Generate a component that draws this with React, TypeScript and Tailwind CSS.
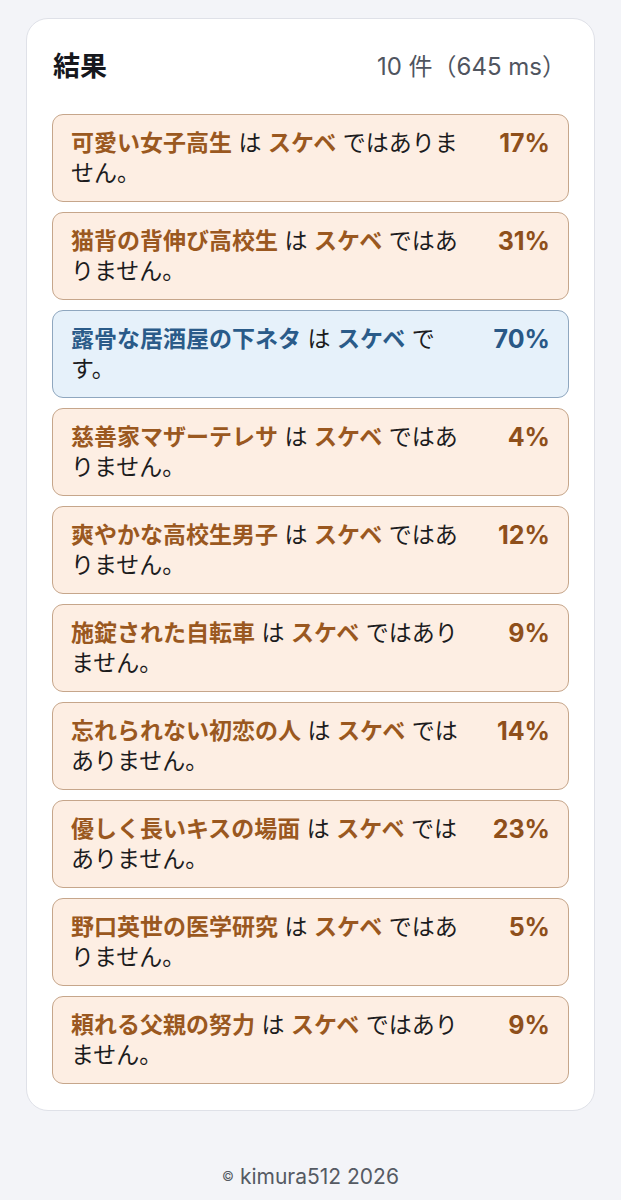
type Result = { subject: string; pct: number; sukebe: boolean };

const results: Result[] = [
  { subject: '可愛い女子高生', pct: 17, sukebe: false },
  { subject: '猫背の背伸び高校生', pct: 31, sukebe: false },
  { subject: '露骨な居酒屋の下ネタ', pct: 70, sukebe: true },
  { subject: '慈善家マザーテレサ', pct: 4, sukebe: false },
  { subject: '爽やかな高校生男子', pct: 12, sukebe: false },
  { subject: '施錠された自転車', pct: 9, sukebe: false },
  { subject: '忘れられない初恋の人', pct: 14, sukebe: false },
  { subject: '優しく長いキスの場面', pct: 23, sukebe: false },
  { subject: '野口英世の医学研究', pct: 5, sukebe: false },
  { subject: '頼れる父親の努力', pct: 9, sukebe: false },
];

const ResultRow = ({ r }: { r: Result }) => {
  const box = r.sukebe
    ? 'bg-[#e6f1fa] border-[#8fa7bf]'
    : 'bg-[#fdeee3] border-[#c6a68b]';
  const accent = r.sukebe ? 'text-[#2a5b89]' : 'text-[#9a5820]';
  const pctColor = r.sukebe ? 'text-[#295886]' : 'text-[#8e4f1b]';

  return (
    <div className={`flex items-start rounded-[11px] border px-[18px] py-[13px] ${box}`}>
      <p className="flex-1 text-[23px] leading-[30px] text-[#1c1c1e]">
        <span className={`font-semibold ${accent}`}>{r.subject}</span> は{' '}
        <span className={`font-semibold ${accent}`}>スケベ</span>{' '}
        {r.sukebe ? 'です。' : 'ではありません。'}
      </p>
      <span className={`w-[80px] shrink-0 text-right text-[25px] font-bold leading-[30px] ${pctColor}`}>
        {r.pct}%
      </span>
    </div>
  );
};

export default function App() {
  return (
    <div
      className="min-h-[1200px] bg-[#f3f4f8] px-[26px] pt-[18px]"
      style={{ fontFamily: 'Inter, "Noto Sans CJK JP", sans-serif' }}
    >
      <div className="rounded-[22px] border border-[#dfe1e8] bg-white px-[25px] pb-[26px] pt-[32px]">
        <div className="mb-[31px] flex items-center justify-between pl-[1px] pr-[3px]">
          <h2 className="text-[27px] font-bold leading-[32px] text-[#16181d]">結果</h2>
          <span className="text-[24px] leading-[32px] text-[#50555f]">10 件（645 ms）</span>
        </div>
        <div className="flex flex-col gap-[10px]">
          {results.map((r) => (
            <ResultRow key={r.subject} r={r} />
          ))}
        </div>
      </div>
      <footer className="flex items-center justify-center gap-[6px] pt-[50px] text-[21px] text-[#555a63]">
        <span className="text-[13px]">©</span>
        <span>kimura512 2026</span>
      </footer>
    </div>
  );
}
